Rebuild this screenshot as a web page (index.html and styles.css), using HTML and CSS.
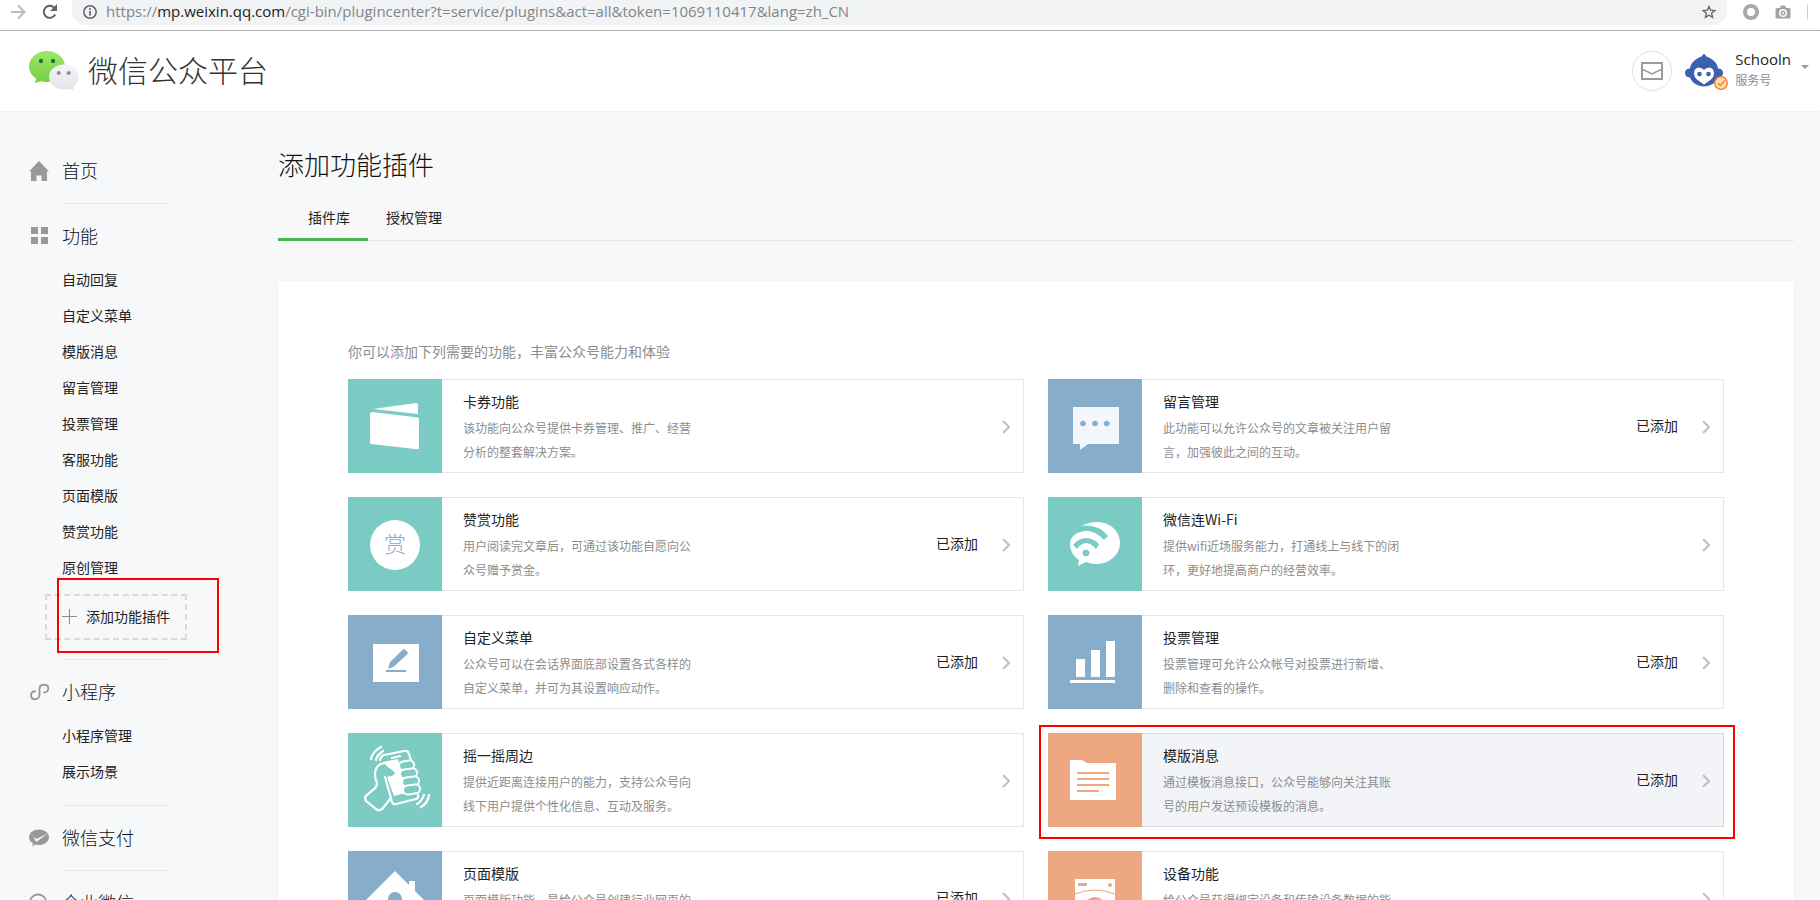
FILE: index.html
```html
<!DOCTYPE html>
<html lang="zh-CN">
<head>
<meta charset="utf-8">
<title>微信公众平台</title>
<link rel="stylesheet" href="styles.css">
</head>
<body>
<div class="browser">
  <button class="tool" type="button" aria-label="前进"><svg width="16" height="16" viewBox="0 0 16 16" fill="none" stroke="#b9bbbe" stroke-width="2"><path d="M1 8h13M8 1.500l6.500 6.500L8 14.500"/></svg></button>
  <button class="tool" type="button" aria-label="刷新"><svg width="16" height="16" viewBox="0 0 16 16"><path d="M13.200 10.500A6 6 0 1 1 12.300 3.800" fill="none" stroke="#5f6368" stroke-width="2"/><path d="M15 0v7H8z" fill="#5f6368"/></svg></button>
  <div class="address">
    <svg width="14" height="14" viewBox="0 0 14 14"><circle cx="7" cy="7" r="6.200" fill="none" stroke="#5f6368" stroke-width="1.500"/><path d="M6.200 6h1.700v4.500H6.200zM6.200 3.300h1.700v1.700H6.200z" fill="#5f6368"/></svg>
    <span class="url">https://<b>mp.weixin.qq.com</b>/cgi-bin/plugincenter?t=service/plugins&amp;act=all&amp;token=1069110417&amp;lang=zh_CN</span>
    <svg width="14" height="14" viewBox="0 0 14 14"><path d="M7 1.400l1.600 3.800 4.200.4-3.200 2.700 1 4.100L7 10.200l-3.600 2.200 1-4.100L1.200 5.600l4.200-.4z" fill="none" stroke="#5f6368" stroke-width="1.300"/></svg>
  </div>
  <div class="extensions">
    <svg width="16" height="16" viewBox="0 0 16 16"><circle cx="8" cy="8" r="6" fill="none" stroke="#a9a9a9" stroke-width="4"/></svg>
    <svg width="16" height="14" viewBox="0 0 16 14"><path d="M2 3h3l1-2.500h4L11 3h3q1.500 0 1.500 1.500v7.500q0 1.500-1.500 1.500H2Q.5 13.500.5 12V4.500Q.5 3 2 3z" fill="#a2a2a2"/><circle cx="8" cy="8" r="3.300" fill="none" stroke="#fff" stroke-width="1.500"/><circle cx="8" cy="8" r="1" fill="#fff"/></svg>
    <span class="bar-end"></span>
  </div>
</div>

<header class="header">
  <a class="brand" href="#">
    <svg width="50" height="40" viewBox="0 0 50 40">
      <defs>
        <linearGradient id="lg" x2="0" y2="1"><stop offset="0" stop-color="#9ee86c"/><stop offset="1" stop-color="#74cf40"/></linearGradient>
        <linearGradient id="lw" x2="0" y2="1"><stop offset="0" stop-color="#f4f4fa"/><stop offset="1" stop-color="#e3e4e8"/></linearGradient>
      </defs>
      <path d="M18 0C28 0 36 7 36 15.500S28 31 18 31q-3.500 0-6-.8L6 32l1.200-4.400C3 25 0 20.500 0 15.500 0 7 8 0 18 0z" fill="url(#lg)"/>
      <circle cx="12" cy="10" r="2.200" fill="#187a2b"/><circle cx="24" cy="10" r="2.200" fill="#187a2b"/>
      <path d="M34.700 13.500c8.200 0 14.800 5.600 14.800 12.500 0 4.200-2 7.500-5.300 10l.8 4-4.500-2.300q-3 .8-5.800.8c-8.200 0-14.700-5.600-14.700-12.500s6.500-12.500 14.700-12.500z" fill="url(#lw)"/>
      <circle cx="29.700" cy="22" r="2" fill="#8b8d91"/><circle cx="39.700" cy="22" r="2" fill="#8b8d91"/>
    </svg>
    <span class="brand-name">微信公众平台</span>
  </a>
  <div class="account">
    <button class="mail" type="button" aria-label="消息"><svg width="22" height="18" viewBox="0 0 22 18" fill="none" stroke="#9a9a9a" stroke-width="2"><path d="M1 1h20v16H1z"/><path d="M1 7l10 5 10-5" stroke-width="1.500"/></svg></button>
    <div class="avatar">
      <svg width="38" height="34" viewBox="0 0 38 34"><path d="M19 0q2 1 2.500 2.500C28 5 32.500 9 33 14.500q5 0 5 4.500 0 4-5 4.500C31 29 25.500 32.500 19 32.500S7 29 5 23.500q-5-.5-5-4.500 0-4.500 5-4.500C5.500 9 10 5 16.500 2.500Q17 1 19 0z" fill="#3a60b0"/><path d="M19 16q2-2.500 5-2.500 5 .5 5 6 0 3-3 6l-7 5-7-5q-3-3-3-6 0-5.500 5-6 3 0 5 2.500z" fill="#fff"/><circle cx="14.500" cy="20" r="2.300" fill="#3a60b0"/><circle cx="23.500" cy="20" r="2.300" fill="#3a60b0"/></svg>
      <svg class="verified" width="14" height="14" viewBox="0 0 14 14"><circle cx="7" cy="7" r="6.300" fill="#fedfae" stroke="#f4762d" stroke-width="1.300"/><path d="M4 7l2.300 2.600L11 4.300" fill="none" stroke="#f4762d" stroke-width="1.300"/></svg>
    </div>
    <div class="who"><span class="who-name">Schooln</span><span class="who-type">服务号</span></div>
    <svg class="caret" width="8" height="4" viewBox="0 0 8 4"><path d="M0 0h8L4 4z" fill="#9a9a9a"/></svg>
  </div>
</header>

<div class="layout">
  <nav class="sidebar">
    <section class="group">
      <a class="group-title" href="#"><svg width="20" height="20" viewBox="0 0 20 20"><path d="M10 0l10 10.500h-2V20h-5.500v-5.500h-5V20H2v-9.500H0z" fill="#999"/></svg>首页</a>
    </section>
    <section class="group">
      <a class="group-title" href="#"><svg width="20" height="20" viewBox="0 0 20 20"><path d="M2 1h7v7H2zM12 1h7v7h-7zM2 11h7v7H2zM12 11h7v7h-7z" fill="#999"/></svg>功能</a>
      <ul class="items">
        <li><a href="#">自动回复</a></li>
        <li><a href="#">自定义菜单</a></li>
        <li><a href="#">模版消息</a></li>
        <li><a href="#">留言管理</a></li>
        <li><a href="#">投票管理</a></li>
        <li><a href="#">客服功能</a></li>
        <li><a href="#">页面模版</a></li>
        <li><a href="#">赞赏功能</a></li>
        <li><a href="#">原创管理</a></li>
      </ul>
      <a class="add" href="#"><svg width="15" height="15" viewBox="0 0 15 15"><path d="M7 0h1v7h7v1H8v7H7V8H0V7h7z" fill="#8d8d8d"/></svg>添加功能插件<span class="mark mark-add"></span></a>
    </section>
    <section class="group">
      <a class="group-title" href="#"><svg width="20" height="18" viewBox="0 0 20 18" fill="none" stroke="#999" stroke-width="1.900" stroke-linecap="round"><path d="M6 8.300C3.500 8.300 2 10 2 12.200 2 14.500 3.600 16.200 6 16.200c2.500 0 4.500-1.700 4.500-4.200V6C10.500 3.500 12.300 1.700 15 1.700c2.500 0 4.300 1.600 4.300 3.800S17.500 9.400 15 9.400"/></svg>小程序</a>
      <ul class="items">
        <li><a href="#">小程序管理</a></li>
        <li><a href="#">展示场景</a></li>
      </ul>
    </section>
    <section class="group">
      <a class="group-title" href="#"><svg width="20" height="18" viewBox="0 0 20 18"><path d="M10 0.500c5.500 0 10 3.400 10 7.700s-4.500 7.800-10 7.800q-2 0-3.800-.5L3.500 17.500l.3-3.300C1.500 12.800 0 10.700 0 8.200 0 3.900 4.500.5 10 .5z" fill="#999"/><path d="M4.500 7.500L7.500 10l11-5.500L8 12.500q-1 .5-1.500-.5z" fill="#f7f8fa"/></svg>微信支付</a>
    </section>
    <section class="group">
      <a class="group-title" href="#"><svg width="20" height="20" viewBox="0 0 20 20" fill="none" stroke="#999" stroke-width="1.800"><path d="M17 9c0-4.500-3.500-7.500-8-7.500S1 5 1 9.500C1 12 2 14 4 15.500V18l3-1.500"/><circle cx="15" cy="14" r="3"/></svg>企业微信</a>
    </section>
  </nav>

  <main class="main">
    <h1 class="page-title">添加功能插件</h1>
    <div class="tabs">
      <a class="tab tab-on" href="#">插件库</a>
      <a class="tab" href="#">授权管理</a>
    </div>
    <div class="panel">
      <p class="intro">你可以添加下列需要的功能，丰富公众号能力和体验</p>
      <div class="cards">

        <a class="card" href="#">
          <svg class="tile teal" viewBox="0 0 94 94" fill="#fff"><path d="M25 30l43-6q2 0 2 1.500V35z"/><path d="M24 33l46 5.500q1 0 1 1.500v29q0 1.500-2 1.200L23.500 65Q22 65 22 63.500V34.500Q22 33 24 33z"/></svg>
          <div class="text"><h2>卡券功能</h2><p>该功能向公众号提供卡券管理、推广、经营分析的整套解决方案。</p></div>
          <svg class="chev" viewBox="0 0 8 14"><path d="M1 1l6 6-6 6"/></svg>
        </a>

        <a class="card" href="#">
          <svg class="tile blue" viewBox="0 0 94 94"><path d="M25 28h46v37H40l-8 6v-6h-7z" fill="#f3f6fa"/><g fill="#86adca"><circle cx="35" cy="44.500" r="2.800"/><circle cx="47" cy="44.500" r="2.800"/><circle cx="58.700" cy="44.500" r="2.800"/></g></svg>
          <div class="text"><h2>留言管理</h2><p>此功能可以允许公众号的文章被关注用户留言，加强彼此之间的互动。</p></div>
          <span class="state">已添加</span>
          <svg class="chev" viewBox="0 0 8 14"><path d="M1 1l6 6-6 6"/></svg>
        </a>

        <a class="card" href="#">
          <svg class="tile teal" viewBox="0 0 94 94"><circle cx="47" cy="48" r="25" fill="#fff"/><text class="reward" x="47" y="55" text-anchor="middle">赏</text></svg>
          <div class="text"><h2>赞赏功能</h2><p>用户阅读完文章后，可通过该功能自愿向公众号赠予赏金。</p></div>
          <span class="state">已添加</span>
          <svg class="chev" viewBox="0 0 8 14"><path d="M1 1l6 6-6 6"/></svg>
        </a>

        <a class="card" href="#">
          <svg class="tile teal" viewBox="0 0 94 94"><path d="M33 29Q41 25 49 25c13 0 23 9 23 21S61 67 48 67q-5 0-10-2l-8 4 1-6c-6-4-9-9-9-17 0-7 8-12 16-12z" fill="#fff"/><g fill="#7acbc4"><path d="M30 30L33 28.800Q51 27 60 39l-4 4Q46 32 33 34z"/><path d="M25 48q6-7 13-7 8 0 13 6.500L48 52q-5-6-10-6t-9 6z"/><circle cx="38" cy="56" r="3.300"/></g></svg>
          <div class="text"><h2>微信连Wi-Fi</h2><p>提供wifi近场服务能力，打通线上与线下的闭环，更好地提高商户的经营效率。</p></div>
          <svg class="chev" viewBox="0 0 8 14"><path d="M1 1l6 6-6 6"/></svg>
        </a>

        <a class="card" href="#">
          <svg class="tile blue" viewBox="0 0 94 94"><path d="M25 29h46v38H25z" fill="#fff"/><path d="M38 55h20v2H38zM40 54l2-7 13-12.500q1-1 2 0l2.500 2.500q1 1 0 2L46 51.500z" fill="#86adca"/></svg>
          <div class="text"><h2>自定义菜单</h2><p>公众号可以在会话界面底部设置各式各样的自定义菜单，并可为其设置响应动作。</p></div>
          <span class="state">已添加</span>
          <svg class="chev" viewBox="0 0 8 14"><path d="M1 1l6 6-6 6"/></svg>
        </a>

        <a class="card" href="#">
          <svg class="tile blue" viewBox="0 0 94 94"><path d="M28 44h9v18h-9zM43 35h9v27h-9zM58 26h9v36h-9zM22 65h45v3H22z" fill="#fff"/></svg>
          <div class="text"><h2>投票管理</h2><p>投票管理可允许公众帐号对投票进行新增、删除和查看的操作。</p></div>
          <span class="state">已添加</span>
          <svg class="chev" viewBox="0 0 8 14"><path d="M1 1l6 6-6 6"/></svg>
        </a>

        <a class="card" href="#">
          <svg class="tile mint" viewBox="0 0 94 94" fill="none" stroke="#fff" stroke-width="2.200" stroke-linejoin="round" stroke-linecap="round">
            <path d="M35 29l15-3 4 16 4 18-12 3-7-19 7-3z" fill="#fff" stroke="none"/>
            <path d="M32 27q1-4 4-5l20-4q4-1 5 3l2 6M44 25l8-2M37 44l7 25q1 3 4 2l20-5q3-1 2-4"/>
            <path d="M36 30q-9 2-9 11 0 5 2 9 0 4-3 6l-7 6q-3 2-1 6l10 8q4 3 7-1l8-10"/>
            <path d="M34 32q8 2 13 8-2 4-8 3l-3-1" fill="#7dccc3" stroke="none"/>
            <g fill="#7dccc3" stroke-width="2"><rect x="51" y="28" width="15" height="9" rx="4.500" transform="rotate(-10 58 32)"/><rect x="52" y="36" width="17" height="9" rx="4.500" transform="rotate(-8 60 40)"/><rect x="54" y="44" width="17" height="9" rx="4.500" transform="rotate(-8 62 48)"/><rect x="55" y="52" width="17" height="9" rx="4.500" transform="rotate(-8 63 56)"/></g>
            <path d="M23 26q2-8 10-12M28 27q1-5 7-9M81 62q-1 8-8 12M76 62q-2 6-7 9"/>
          </svg>
          <div class="text"><h2>摇一摇周边</h2><p>提供近距离连接用户的能力，支持公众号向线下用户提供个性化信息、互动及服务。</p></div>
          <svg class="chev" viewBox="0 0 8 14"><path d="M1 1l6 6-6 6"/></svg>
        </a>

        <a class="card card-on" href="#">
          <svg class="tile orange" viewBox="0 0 94 94"><path d="M22 27h12l5 3h29v37H22z" fill="#fff"/><path d="M29 39h32v2H29zM29 45h32v2H29zM29 51h32v2H29zM29 57h22v2H29z" fill="#eda882"/></svg>
          <div class="text"><h2>模版消息</h2><p>通过模板消息接口，公众号能够向关注其账号的用户发送预设模板的消息。</p></div>
          <span class="state">已添加</span>
          <svg class="chev" viewBox="0 0 8 14"><path d="M1 1l6 6-6 6"/></svg>
          <span class="mark mark-card"></span>
        </a>

        <a class="card" href="#">
          <svg class="tile blue" viewBox="0 0 94 94"><path d="M47 20l14 14v-4h6v10l9 9h-9v24H27V49h-9z" fill="#fff"/><circle cx="47" cy="48" r="7" fill="#86adca"/></svg>
          <div class="text"><h2>页面模版</h2><p>页面模版功能，是给公众号创建行业网页的功能插件。</p></div>
          <span class="state">已添加</span>
          <svg class="chev" viewBox="0 0 8 14"><path d="M1 1l6 6-6 6"/></svg>
        </a>

        <a class="card" href="#">
          <svg class="tile orange" viewBox="0 0 94 94"><path d="M27 28h40v44H27z" fill="#fff"/><path d="M30 32h9v3h-9z" fill="#eda882"/><circle cx="62" cy="34" r="2" fill="#eda882"/><path d="M27 43q20-8 40 0" fill="none" stroke="#eda882"/><circle cx="47" cy="57" r="11" fill="#eda882"/></svg>
          <div class="text"><h2>设备功能</h2><p>给公众号获得绑定设备和传输设备数据的能力。</p></div>
          <svg class="chev" viewBox="0 0 8 14"><path d="M1 1l6 6-6 6"/></svg>
        </a>
      </div>
    </div>
  </main>
</div>
</body>
</html>
```
FILE: styles.css
```css
* { box-sizing: border-box; }
html { overflow: hidden; }
body {
  margin: 0;
  height: 100vh;
  overflow: hidden;
  background: #f7f8fa;
  color: #222;
  font: 14px/24px "Noto Sans CJK SC", sans-serif;
}
a { color: inherit; text-decoration: none; }
h1, h2, p, ul { margin: 0; padding: 0; font-weight: inherit; }
ul { list-style: none; }
svg { display: block; flex: none; }
button { padding: 0; border: 0; background: none; }

.browser {
  display: flex;
  align-items: center;
  height: 31px;
  padding: 0 12px 6px 10px;
  border-bottom: 1px solid #b0b0b0;
  background: #fff;
}
.tool { width: 16px; margin-right: 16px; }
.tool + .tool { margin-right: 14px; }
.address {
  flex: 1;
  display: flex;
  align-items: center;
  gap: 9px;
  height: 26px;
  padding: 0 11px;
  border-radius: 0 0 14px 14px;
  background: #f1f3f4;
}
.url {
  flex: 1;
  padding-bottom: 2px;
  color: #80868b;
  font: 15px/24px "Open Sans", "Noto Sans", sans-serif;
  white-space: nowrap;
}
.url b { color: #222; font-weight: 400; }
.extensions { display: flex; align-items: center; gap: 16px; margin-left: 16px; }
.bar-end { width: 1px; height: 16px; background: #d0d0d0; }

.header {
  display: flex;
  justify-content: space-between;
  align-items: center;
  height: 80px;
  padding: 0 11px 0 29px;
  background: #fff;
  box-shadow: 0 1px 2px #eef0f2;
}
.brand { display: flex; align-items: center; gap: 9px; }
.brand-name { padding-bottom: 4px; color: #333; font-size: 30px; font-weight: 300; line-height: 40px; }
.account { display: flex; align-items: center; }
.mail {
  display: flex;
  align-items: center;
  justify-content: center;
  width: 40px;
  height: 40px;
  margin-right: 13px;
  border: 1px solid #e0e4e4;
  border-radius: 50%;
}
.avatar { position: relative; margin-right: 12px; }
.verified { position: absolute; right: -5px; bottom: -2px; }
.who { display: flex; flex-direction: column; padding-bottom: 4px; }
.who-name { font-size: 15px; line-height: 22px; font-family: "Open Sans", "Noto Sans", sans-serif; }
.who-type { color: #8d8d8d; font-size: 12px; line-height: 20px; }
.caret { margin: 0 0 8px 10px; }

.layout { display: flex; }
.sidebar { width: 278px; flex: none; padding: 28px 0 0 29px; }
.group { display: flex; flex-direction: column; }
.group::after {
  content: "";
  width: 108px;
  height: 1px;
  margin: 7px 0 0 33px;
  background: #e4e6e9;
}
.group-title {
  display: flex;
  align-items: center;
  gap: 13px;
  padding: 19px 0 13px;
  color: #111;
  font-size: 18px;
  font-weight: 300;
  line-height: 25px;
}
.items { padding-left: 33px; line-height: 36px; }
.items:last-child { padding-bottom: 9px; }
.add {
  position: relative;
  display: flex;
  align-items: center;
  gap: 9px;
  width: 142px;
  height: 46px;
  margin: 9px 0 12px 16px;
  padding: 0 0 2px 15px;
  border: 2px dashed #d9dadc;
  white-space: nowrap;
}
.mark { position: absolute; border: 2px solid #f00; pointer-events: none; }
.mark-add { inset: -18px -34px -15px 10px; }
.mark-card { inset: -9px -12px -13px -10px; }

.main { flex: 1; min-width: 0; padding: 31px 26px 0 0; }
.page-title { color: #111; font-size: 26px; font-weight: 300; line-height: 44px; }
.tabs {
  display: flex;
  height: 55px;
  border-bottom: 1px solid #e4e6e9;
}
.tab { height: 55px; padding: 19px 18px 0; }
.tab-on { padding: 19px 18px 0 30px; border-bottom: 3px solid #4ab550; }
.panel {
  margin-top: 40px;
  padding: 58px 70px 60px;
  border-radius: 4px;
  background: #fff;
  box-shadow: 0 1px 3px #eceef0;
}
.intro { color: #8d8d8d; }
.cards {
  display: grid;
  grid-template-columns: 1fr 1fr;
  gap: 24px;
  margin-top: 16px;
}
.card {
  position: relative;
  display: flex;
  align-items: center;
  height: 94px;
  padding-right: 13px;
  border: 1px solid #e5e6ea;
}
.card-on { border-color: #d9dadc; background: #f3f4f8; }
.tile { width: 94px; height: 94px; margin: -1px 21px -1px -1px; }
.teal { background: #7acbc4; }
.mint { background: #7dccc3; }
.blue { background: #86adca; }
.orange { background: #eda882; }
.reward { fill: #86adca; font-size: 22px; font-weight: 300; }
.text { flex: 1; }
.text h2 { padding-bottom: 3px; font-size: 14px; line-height: 24px; }
.text p { max-width: 238px; color: #8d8d8d; font-size: 12px; line-height: 24px; }
.state { padding-bottom: 2px; }
.chev { width: 8px; height: 14px; margin: 2px 0 0 24px; fill: none; stroke: #c0c0c0; stroke-width: 2; }
```
